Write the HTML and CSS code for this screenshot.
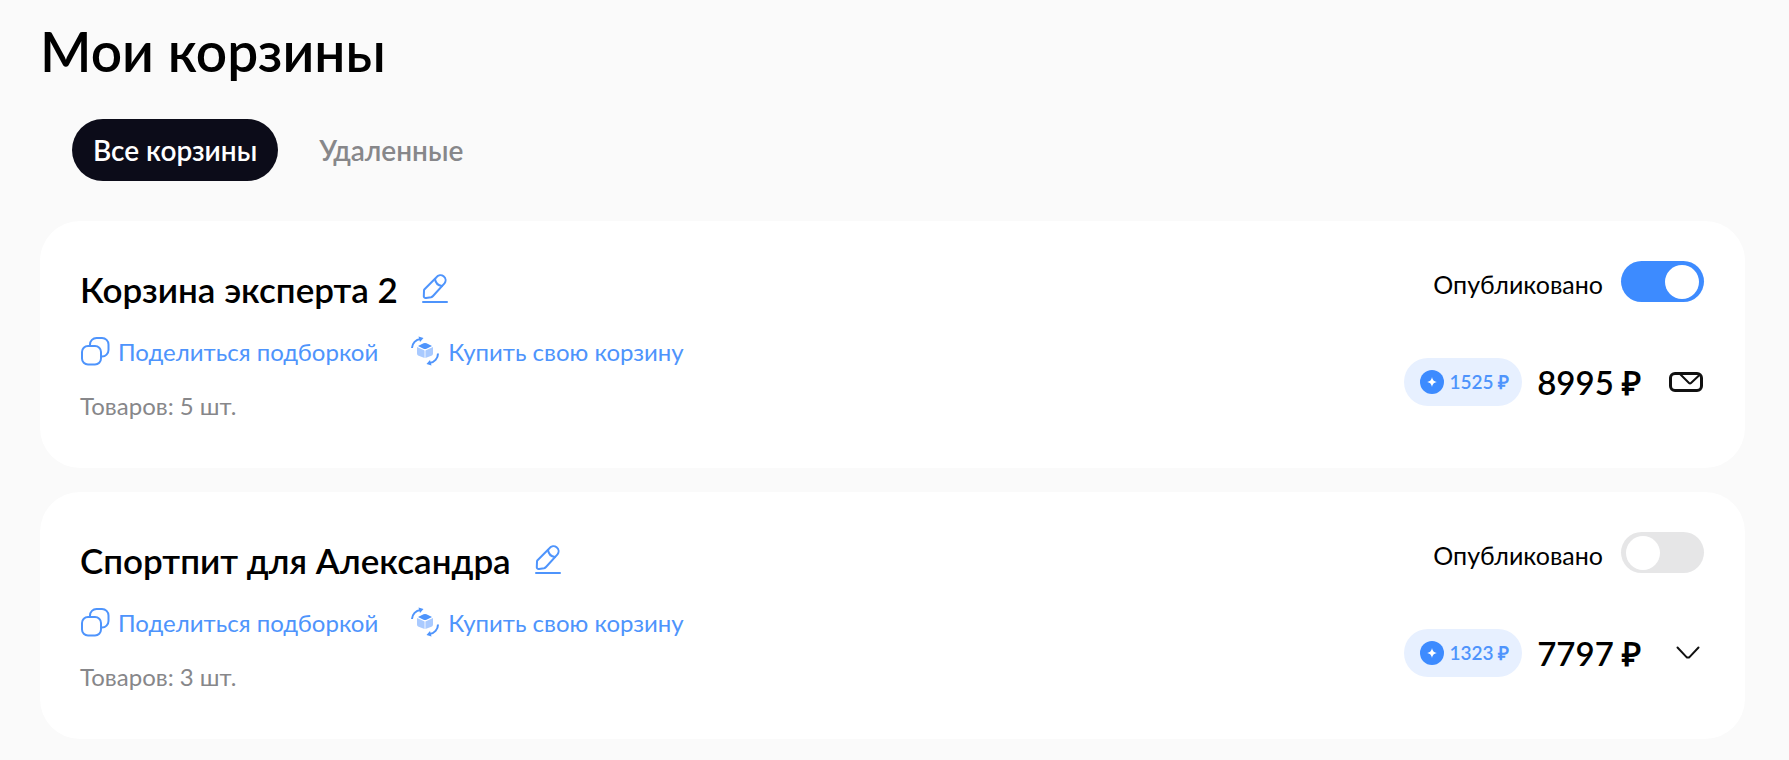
FILE: index.html
```html
<!DOCTYPE html>
<html lang="ru">
<head>
  <meta charset="UTF-8">
  <meta name="viewport" content="width=device-width, initial-scale=1.0">
  <title>Мои корзины</title>
  <link rel="stylesheet" href="styles.css">
</head>
<body>
  <!-- Shared icons -->
  <svg class="sprite" aria-hidden="true">
    <symbol id="icon-edit" viewBox="0 0 26 30" fill="none" stroke="currentColor" stroke-width="2" stroke-linecap="round" stroke-linejoin="round">
      <path d="M2.3 15.500 14.500 3.200a5 5 0 0 1 8 6.200L11 22a4 4 0 0 1-2 1.200l-5 .8a1.800 1.800 0 0 1-2.200-2l.2-5a3 3 0 0 1 .3-1.500z"></path>
      <path d="M13 5c.6 4.200 3.200 6.600 7 7"></path>
      <line x1="1" y1="28" x2="25" y2="28"></line>
    </symbol>
    <symbol id="icon-share" viewBox="0 0 30 30" fill="none" stroke="currentColor" stroke-width="2">
      <rect x="2" y="10" width="19" height="18.500" rx="6"></rect>
      <path d="M10 10V8.500A6.500 6.500 0 0 1 16.500 2H22a6.500 6.500 0 0 1 6.500 6.500V14a6.500 6.500 0 0 1-6.500 6.500h-1"></path>
    </symbol>
    <symbol id="icon-buy" viewBox="0 0 30 30">
      <path d="M2 12A9.500 9.500 0 0 1 10.500 3M28 17.500a9.500 9.500 0 0 1-8.500 9.500" fill="none" stroke="currentColor" stroke-width="2"></path>
      <path d="M8.500.500l5 1.500-3.500 4zM21.500 29.500l-5-1.500 3.500-4z" fill="currentColor"></path>
      <path d="M7 11l7.600 3.400v7.600l-6-2.300a2.500 2.500 0 0 1-1.600-2.300zM23 11l-7.600 3.400v7.600l6-2.300a2.500 2.500 0 0 0 1.600-2.300z" fill="#a9caff"></path>
      <path d="M8 10l5.500-2.800a4 4 0 0 1 3 0L22 10l-5.500 2.800a4 4 0 0 1-3 0z" fill="currentColor"></path>
    </symbol>
    <symbol id="icon-bonus" viewBox="0 0 24 24">
      <circle cx="12" cy="12" r="12" fill="#3d8bff"></circle>
      <path d="M12 7c.8 3.300 1.700 4.200 5 5-3.300.8-4.200 1.700-5 5-.8-3.300-1.700-4.200-5-5 3.300-.8 4.200-1.700 5-5z" fill="#fff"></path>
    </symbol>
    <symbol id="icon-open" viewBox="0 0 36 22" fill="none" stroke="currentColor">
      <rect x="2.500" y="2.500" width="31" height="17" rx="4.500" stroke-width="3"></rect>
      <path d="M12 3l9 9a1.400 1.400 0 0 0 2 0l8.500-8" stroke-width="2"></path>
    </symbol>
    <symbol id="icon-down" viewBox="0 0 24 14" fill="none" stroke="currentColor" stroke-width="2" stroke-linecap="round">
      <path d="M1.500 1.500l8.800 9.300a2.200 2.200 0 0 0 3.400 0l8.800-9.300"></path>
    </symbol>
  </svg>

  <main class="page">
    <h1 class="page-title">Мои корзины</h1>

    <nav class="tabs">
      <button class="tab tab-active" type="button">Все корзины</button>
      <button class="tab" type="button">Удаленные</button>
    </nav>

    <section class="cart">
      <div class="cart-info">
        <div class="cart-head">
          <h2 class="cart-name">Корзина эксперта 2</h2>
          <button class="icon-button" type="button" aria-label="Переименовать">
            <svg class="icon-edit"><use href="#icon-edit"></use></svg>
          </button>
        </div>
        <div class="cart-links">
          <a class="cart-link" href="#"><svg class="icon"><use href="#icon-share"></use></svg>Поделиться подборкой</a>
          <a class="cart-link" href="#"><svg class="icon"><use href="#icon-buy"></use></svg>Купить свою корзину</a>
        </div>
        <p class="cart-count">Товаров: 5 шт.</p>
      </div>
      <div class="cart-side">
        <label class="publish"><span class="publish-text">Опубликовано</span><input class="switch" type="checkbox" checked></label>
        <div class="cart-total">
          <span class="bonus"><svg class="icon-bonus"><use href="#icon-bonus"></use></svg>1525 ₽</span>
          <span class="price">8995 ₽</span>
          <button class="icon-button expand" type="button" aria-label="Свернуть">
            <svg class="icon-open"><use href="#icon-open"></use></svg>
          </button>
        </div>
      </div>
    </section>

    <section class="cart">
      <div class="cart-info">
        <div class="cart-head">
          <h2 class="cart-name">Спортпит для Александра</h2>
          <button class="icon-button" type="button" aria-label="Переименовать">
            <svg class="icon-edit"><use href="#icon-edit"></use></svg>
          </button>
        </div>
        <div class="cart-links">
          <a class="cart-link" href="#"><svg class="icon"><use href="#icon-share"></use></svg>Поделиться подборкой</a>
          <a class="cart-link" href="#"><svg class="icon"><use href="#icon-buy"></use></svg>Купить свою корзину</a>
        </div>
        <p class="cart-count">Товаров: 3 шт.</p>
      </div>
      <div class="cart-side">
        <label class="publish"><span class="publish-text">Опубликовано</span><input class="switch" type="checkbox"></label>
        <div class="cart-total">
          <span class="bonus"><svg class="icon-bonus"><use href="#icon-bonus"></use></svg>1323 ₽</span>
          <span class="price">7797 ₽</span>
          <button class="icon-button expand" type="button" aria-label="Развернуть">
            <svg class="icon-down"><use href="#icon-down"></use></svg>
          </button>
        </div>
      </div>
    </section>
  </main>
</body>
</html>
```
FILE: styles.css
```css
*, *::before, *::after {
  margin: 0;
  padding: 0;
  box-sizing: border-box;
}

body {
  font-family: Lato, 'Open Sans', sans-serif;
  font-size: 24px;
  background-color: #fafafa;
  color: #000;
}

button {
  border: none;
  background: none;
  font: inherit;
  cursor: pointer;
}

svg {
  display: block;
  flex-shrink: 0;
}

.sprite {
  display: none;
}

.page {
  padding: 15px 44px 20px 40px;
}

.page-title {
  font-size: 55px;
  font-weight: 600;
  line-height: 72px;
}

.tabs {
  display: flex;
  margin: 32px 0 40px 32px;
}

.tab {
  height: 62px;
  padding: 0 21px;
  margin-right: 20px;
  border-radius: 31px;
  font-size: 28px;
  font-weight: 600;
  color: #87878a;
}

.tab-active {
  background-color: #0c0c19;
  color: #fff;
}

.cart {
  display: flex;
  justify-content: space-between;
  padding: 40px 41px 42px 40px;
  margin-bottom: 24px;
  border-radius: 40px;
  background-color: #fff;
}

.cart-head {
  display: flex;
  align-items: center;
  gap: 24px;
  height: 56px;
}

.cart-name {
  font-size: 35px;
  font-weight: 600;
}

.icon-button {
  color: #4e94fc;
}

.icon-edit {
  width: 26px;
  height: 30px;
}

.cart-links {
  display: flex;
  gap: 32px;
  margin: 14px 0 15px;
}

.cart-link {
  display: flex;
  align-items: center;
  gap: 8px;
  height: 40px;
  color: #4e94fc;
  text-decoration: none;
}

.icon {
  width: 30px;
  height: 30px;
}

.cart-count {
  line-height: 40px;
  color: #87878a;
}

.cart-side {
  display: flex;
  flex-direction: column;
  align-items: flex-end;
  gap: 56px;
}

.publish {
  display: flex;
  align-items: center;
  gap: 18px;
  height: 41px;
}

.publish-text {
  padding-top: 4px;
  font-size: 25px;
}

.switch {
  appearance: none;
  width: 83px;
  height: 41px;
  padding: 4px 5px;
  border-radius: 21px;
  background-color: #e6e6e7;
  cursor: pointer;
}

.switch::before {
  content: '';
  display: block;
  width: 34px;
  height: 34px;
  border-radius: 50%;
  background-color: #fff;
}

.switch:checked {
  background-color: #3d8bff;
}

.switch:checked::before {
  margin-left: auto;
}

.cart-total {
  display: flex;
  align-items: center;
  height: 48px;
}

.bonus {
  display: flex;
  align-items: center;
  gap: 5px;
  height: 48px;
  padding: 0 13px 0 16px;
  border-radius: 24px;
  background-color: #e7f0ff;
  color: #4e94fc;
  font-size: 19px;
  font-weight: 600;
}

.icon-bonus {
  width: 24px;
  height: 24px;
}

.price {
  margin-left: 15px;
  font-size: 33px;
  font-weight: 600;
}

.expand {
  display: flex;
  justify-content: flex-end;
  width: 63px;
  color: #111;
}

.icon-open {
  width: 36px;
  height: 22px;
}

.icon-down {
  width: 24px;
  height: 14px;
  margin-right: 4px;
}
```
